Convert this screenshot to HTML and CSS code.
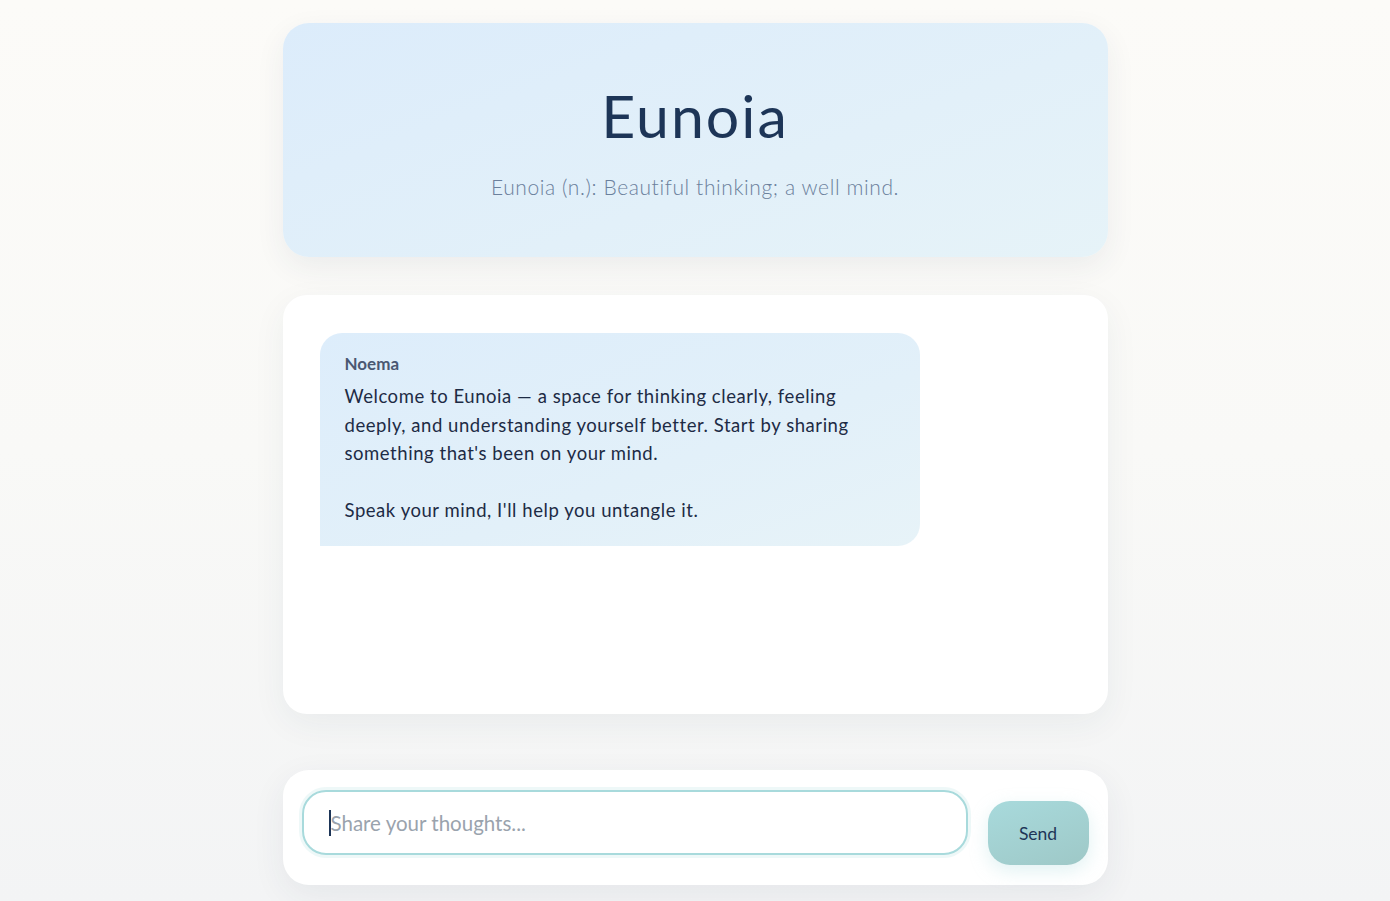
FILE: index.html
```html
<!DOCTYPE html>
<html lang="en">
<head>
<meta charset="utf-8">
<title>Eunoia</title>
<link rel="stylesheet" href="styles.css">
</head>
<body>
<main class="app">
  <header class="hero">
    <h1 class="title">Eunoia</h1>
    <p class="subtitle">Eunoia (n.): Beautiful thinking; a well mind.</p>
  </header>
  <section class="chat">
    <div class="bubble">
      <div class="sender">Noema</div>
      <p class="msg">Welcome to Eunoia — a space for thinking clearly, feeling deeply, and understanding yourself better. Start by sharing something that's been on your mind.</p>
      <p class="msg gap">Speak your mind, I'll help you untangle it.</p>
    </div>
  </section>
  <section class="composer">
    <div class="field"><span class="caret"></span><span class="placeholder">Share your thoughts...</span></div>
    <button class="send" type="button">Send</button>
  </section>
</main>
</body>
</html>
```
FILE: styles.css
```css
* { box-sizing: border-box; }
html, body { height: 100%; }
body {
  margin: 0;
  font-family: "Lato", "Noto Sans", sans-serif;
  color: #1d3557;
  background: linear-gradient(180deg, #fcfbf8 0%, #f9f9f7 50%, #f3f4f5 100%);
}
.app {
  width: 825px;
  margin: 0 auto;
  padding-top: 23px;
  display: flex;
  flex-direction: column;
}
.hero {
  height: 234px;
  border-radius: 26px;
  background: linear-gradient(160deg, #dcecfb 0%, #e2f0f9 60%, #e6f3f8 100%);
  box-shadow: 0 10px 30px rgba(40, 60, 80, 0.07);
  display: flex;
  flex-direction: column;
  align-items: center;
  padding-top: 58px;
}
.title {
  margin: 0;
  font-size: 59px;
  line-height: 70px;
  font-weight: 400;
  letter-spacing: 2px;
  color: #1d3557;
}
.subtitle {
  margin: 24px 0 0;
  font-size: 21px;
  line-height: 24px;
  letter-spacing: 0.6px;
  color: #6b809c;
  font-weight: 300;
}
.chat {
  margin-top: 38px;
  height: 419px;
  background: #ffffff;
  border-radius: 24px;
  box-shadow: 0 10px 34px rgba(40, 60, 80, 0.06);
  padding: 38px 37px;
}
.bubble {
  width: 600px;
  border-radius: 22px 22px 22px 0;
  background: linear-gradient(160deg, #ddedfb 0%, #e2f0f9 60%, #e7f3f8 100%);
  padding: 20px 25px 21px;
}
.sender {
  font-size: 17px;
  font-weight: 700;
  color: #4a5872;
  line-height: 22px;
  margin-bottom: 7px;
}
.msg {
  margin: 0;
  font-size: 18.5px;
  line-height: 28.5px;
  letter-spacing: 0.55px;
  color: #1d2b45;
}
.msg.gap { margin-top: 28.5px; }
.composer {
  margin-top: 56px;
  height: 115px;
  background: #ffffff;
  border-radius: 26px;
  box-shadow: 0 10px 34px rgba(40, 60, 80, 0.07);
  padding: 20px 19px 20px 19px;
  display: flex;
  align-items: flex-start;
  gap: 20px;
}
.field {
  flex: 1;
  height: 65px;
  border: 2px solid #a8dadc;
  border-radius: 24px;
  box-shadow: 0 0 0 3px rgba(168, 218, 220, 0.2);
  display: flex;
  align-items: center;
  padding-left: 25px;
  background: #fff;
}
.caret {
  width: 2px;
  height: 26px;
  background: #1d3557;
}
.placeholder {
  font-size: 20.5px;
  color: #9aa3ad;
}
.send {
  margin-top: 11px;
  width: 101px;
  height: 64px;
  border: 0;
  border-radius: 22px;
  background: linear-gradient(160deg, #a8dadc 0%, #9ec8c7 100%);
  box-shadow: 0 6px 18px rgba(168, 218, 220, 0.35);
  font-family: inherit;
  font-size: 17.5px;
  color: #1d3557;
  padding-top: 2px;
}
```
